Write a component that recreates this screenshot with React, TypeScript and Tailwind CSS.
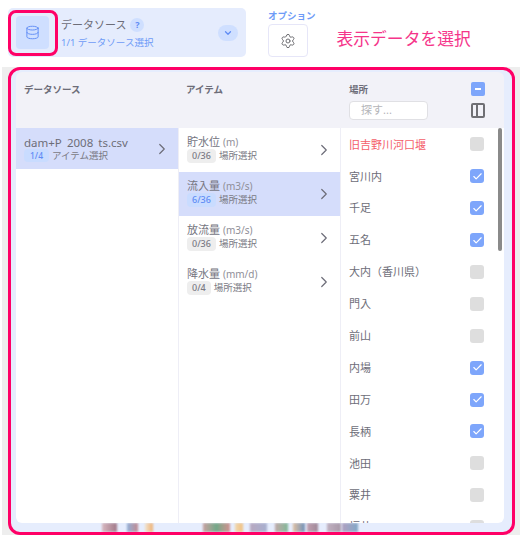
import { Check, ChevronDown, ChevronRight, Database, Settings } from "lucide-react";

const font = { fontFamily: '"Noto Sans", "Noto Sans CJK JP", sans-serif' };

const items = [
  { name: "貯水位", unit: "(m)", count: "0/36", active: false },
  { name: "流入量", unit: "(m3/s)", count: "6/36", active: true },
  { name: "放流量", unit: "(m3/s)", count: "0/36", active: false },
  { name: "降水量", unit: "(mm/d)", count: "0/4", active: false },
];

const places = [
  { name: "旧吉野川河口堰", on: false },
  { name: "宮川内", on: true },
  { name: "千足", on: true },
  { name: "五名", on: true },
  { name: "大内（香川県）", on: false },
  { name: "門入", on: false },
  { name: "前山", on: false },
  { name: "内場", on: true },
  { name: "田万", on: true },
  { name: "長柄", on: true },
  { name: "池田", on: false },
  { name: "粟井", on: false },
  { name: "福井", on: false },
];

// the blurred chart that peeks out under the panel
const blurs = [
  "ml-[86px] w-[15px] from-[#d8b8c0] to-[#a07888]",
  "ml-[10px] w-[11px] from-[#90b0d8] to-[#c08890]",
  "ml-[7px] w-[8px] from-[#f0e4d0] to-[#eeb070]",
  "ml-[50px] w-[27px] from-[#c8a0a0] via-[#70a888] to-[#d09090]",
  "ml-[5px] w-[8px] from-[#f0d8b0] to-[#f0c080]",
  "ml-[7px] w-[17px] from-[#b8a8c0] to-[#a8b0d0]",
  "ml-[8px] w-[13px] from-[#c0a8a8] to-[#80b898]",
  "ml-[5px] w-[12px] from-[#e0c0a0] to-[#7090b8]",
  "ml-[2px] w-[11px] from-[#c0a0b0] to-[#a08898]",
  "ml-[9px] w-[14px] from-[#c0b0c0] to-[#a898a8]",
  "ml-[1px] w-[16px] from-[#b0a0c0] to-[#80a8c8]",
];

function Checkbox({ on }: { on: boolean }) {
  return (
    <div
      className={`w-[14px] h-[14px] rounded-[3px] flex items-center justify-center ${
        on ? "bg-[#7ea6fb]" : "bg-[#dedede]"
      }`}
    >
      {on && <Check className="w-[11px] h-[11px] text-white" strokeWidth={2.5} />}
    </div>
  );
}

export default function App() {
  return (
    <div className="relative w-[520px] h-[541px] overflow-hidden bg-white" style={font}>
      <div className="flex h-[67px] pl-[8px] pt-[8px]">
        <div className="relative flex w-[238px] h-[49px] items-center rounded-[5px] bg-[#e5ecfd] pl-[8px] pr-[8px]">
          <div className="flex w-[33px] h-[33px] items-center justify-center rounded-[4px] bg-[#cfdfff]">
            <Database className="w-[15px] h-[15px] text-[#5f8cf5]" strokeWidth={1.5} />
          </div>
          <div className="ml-[12px] flex-1">
            <div className="flex items-center gap-[4px] h-[18px]">
              <span className="text-[11px] leading-[18px] text-[#6d6d78]">データソース</span>
              <span className="flex w-[14px] h-[14px] items-center justify-center rounded-full bg-[#cfdfff] text-[9px] font-bold text-[#5f8cf5]">?</span>
            </div>
            <div className="mt-[1px] text-[9.5px] leading-[15px] text-[#6e9bf7]">1/1 データソース選択</div>
          </div>
          <div className="flex w-[20px] h-[16px] items-center justify-center rounded-full bg-[#cfdfff]">
            <ChevronDown className="w-[10px] h-[10px] text-[#5f8cf5]" strokeWidth={3} />
          </div>
          <div className="absolute left-0 top-[2px] w-[50px] h-[46px] rounded-[8px] border-[3px] border-[#ff0066]" />
        </div>
        <div className="ml-[22px] flex flex-col">
          <div className="text-[9.5px] leading-[16px] font-bold text-[#6e9bf7]">オプション</div>
          <div className="flex w-[40px] h-[33px] items-center justify-center rounded-[4px] border border-[#e6e6f8]">
            <Settings className="w-[16px] h-[16px] text-[#6f6f74]" strokeWidth={1.5} />
          </div>
        </div>
        <div className="ml-[21px] mt-[19px] text-[16.8px] leading-[24px] text-[#f5358a]">表示データを選択</div>
      </div>

      <div className="ml-[2px] h-[468px] bg-[#eeeeee] pl-[6px] pr-[5px]">
        <div className="relative h-full rounded-[12px] border-[3px] border-[#ff0066] bg-[#e6edfd] pl-[5px] pr-[8px] pt-[2px] overflow-hidden">
          <div className="overflow-hidden rounded-[6px]">
            <div className="grid grid-cols-[163px_162px_161px] h-[56px] bg-[#f2f2f8] text-[9.5px] font-bold text-[#6d6d78]">
              <div className="pl-[8px] pt-[10px] leading-[15px]">データソース</div>
              <div className="pl-[7px] pt-[10px] leading-[15px]">アイテム</div>
              <div className="flex pl-[8px] pt-[10px] pr-[17px]">
                <div className="flex-1">
                  <div className="leading-[15px]">場所</div>
                  <div className="mt-[4px] w-[79px] h-[19px] rounded-[4px] border border-[#e0e0e4] bg-white pl-[11px] text-[11px] leading-[16px] font-normal text-[#b5b5b9]">探す...</div>
                </div>
                <div className="flex flex-col items-center">
                  <div className="flex w-[14px] h-[14px] items-center justify-center rounded-[2px] bg-[#7ea6fb]">
                    <div className="w-[6px] h-[1.5px] bg-white" />
                  </div>
                  <div className="mt-[7px] flex w-[14px] h-[15px] rounded-[2px] border-2 border-[#6f6f74]">
                    <div className="w-[5px] border-r-2 border-[#6f6f74]" />
                  </div>
                </div>
              </div>
            </div>

            <div className="grid grid-cols-[163px_162px_161px] h-[395px] bg-white">
              <div className="border-r border-[#eeeef6]">
                <div className="flex h-[41px] items-center bg-[#d5ddfb] pl-[8px] pr-[7px]">
                  <div className="flex-1">
                    <div className="h-[12px] mb-[1px] overflow-hidden text-[11.5px] leading-[14px] text-[#6d6d78]">dam+P_2008_ts.csv</div>
                    <div className="flex items-center gap-[3px] h-[13px]">
                      <span className="rounded-[4px] bg-[#c9dcff] px-[6px] text-[8.5px] leading-[13px] font-medium text-[#5f8cf5]">1/4</span>
                      <span className="text-[9.5px] leading-[13px] text-[#7a7a84]">アイテム選択</span>
                    </div>
                  </div>
                  <ChevronRight className="w-[18px] h-[18px] text-[#6d6d78]" strokeWidth={1.6} />
                </div>
              </div>

              <div className="border-r border-[#eeeef6]">
                {items.map((item) => (
                  <div
                    key={item.name}
                    className={`flex h-[44px] items-center pl-[8px] pr-[7px] ${item.active ? "bg-[#d5ddfb]" : ""}`}
                  >
                    <div className="flex-1 pb-[2px]">
                      <div className="text-[11px] leading-[14px] text-[#75757f]">
                        {item.name} <span className="text-[10px] text-[#8f8f98]">{item.unit}</span>
                      </div>
                      <div className="flex items-center gap-[3px]">
                        <span
                          className={`rounded-[4px] px-[5px] text-[9px] leading-[14px] font-medium ${
                            item.active ? "bg-[#c9dcff] text-[#5f8cf5]" : "bg-[#eeeeee] text-[#7a7a84]"
                          }`}
                        >
                          {item.count}
                        </span>
                        <span className="text-[9.5px] leading-[14px] text-[#7a7a84]">場所選択</span>
                      </div>
                    </div>
                    <ChevronRight className="w-[18px] h-[18px] text-[#6d6d78]" strokeWidth={1.6} />
                  </div>
                ))}
              </div>

              <div className="overflow-hidden pl-[8px] pr-[18px] pt-[0.5px]">
                {places.map((place) => (
                  <div key={place.name} className="flex h-[31.9px] items-center justify-between">
                    <span className={`text-[11px] pt-[1px] ${place.name === "旧吉野川河口堰" ? "text-[#f4606a]" : "text-[#6d6d78]"}`}>
                      {place.name}
                    </span>
                    <Checkbox on={place.on} />
                  </div>
                ))}
              </div>
            </div>
          </div>

          <div className="flex h-[9px] overflow-hidden">
            {blurs.map((cls) => (
              <div key={cls} className={`h-[9px] blur-[1px] bg-gradient-to-r ${cls}`} />
            ))}
          </div>

          <div className="absolute left-[487px] top-[58px] w-[3.5px] h-[123px] rounded-full bg-[#8a8a8a]" />
        </div>
      </div>
    </div>
  );
}
